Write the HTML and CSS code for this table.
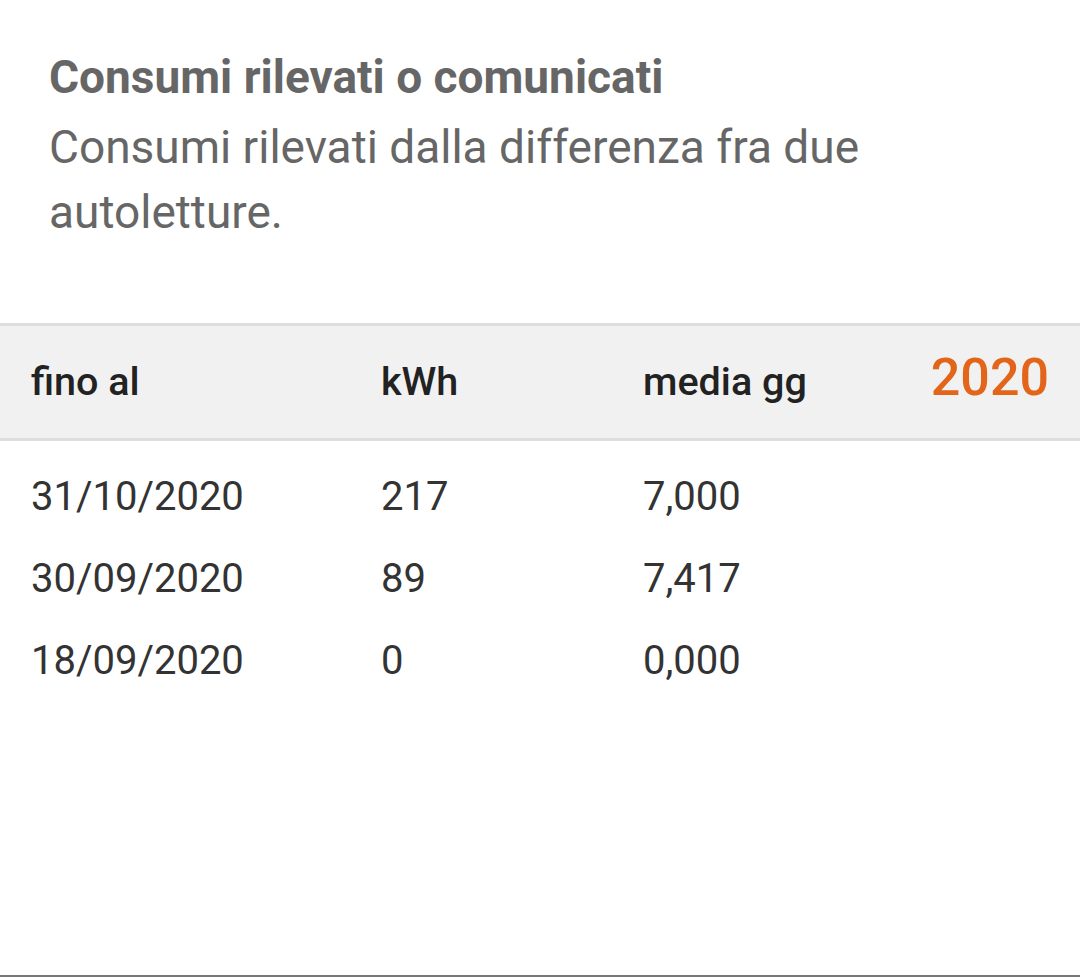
FILE: index.html
```html
<!DOCTYPE html>
<html lang="it">
<head>
<meta charset="utf-8">
<link rel="stylesheet" href="styles.css">
</head>
<body>
<div class="screen">
  <section class="intro">
    <h1 class="title">Consumi rilevati o comunicati</h1>
    <p class="desc">Consumi rilevati dalla differenza fra due autoletture.</p>
  </section>
  <div class="table">
    <div class="head">
      <span class="c1">fino al</span>
      <span class="c2">kWh</span>
      <span class="c3">media gg</span>
      <span class="year">2020</span>
    </div>
    <div class="rows">
      <div class="row"><span class="c1">31/10/2020</span><span class="c2">217</span><span class="c3">7,000</span></div>
      <div class="row"><span class="c1">30/09/2020</span><span class="c2">89</span><span class="c3">7,417</span></div>
      <div class="row"><span class="c1">18/09/2020</span><span class="c2">0</span><span class="c3">0,000</span></div>
    </div>
  </div>
</div>
</body>
</html>
```
FILE: styles.css
```css
html, body {
  margin: 0;
  padding: 0;
  background: #ffffff;
}
.screen {
  height: 977px;
  box-sizing: border-box;
  border-bottom: 2px solid #777777;
  font-family: Roboto, "Noto Sans", sans-serif;
  display: flex;
  flex-direction: column;
}
.intro {
  padding: 49px 180px 0 49px;
}
.title {
  margin: 0;
  font-size: 46px;
  font-weight: 700;
  color: #666666;
  line-height: 56px;
}
.desc {
  margin: 10px 0 0;
  font-size: 46px;
  font-weight: 400;
  color: #666666;
  line-height: 65px;
}
.table {
  margin-top: 78px;
}
.head {
  display: flex;
  align-items: center;
  height: 112px;
  background: #f1f1f1;
  border-top: 3px solid #dddddd;
  border-bottom: 3px solid #dddddd;
  padding-left: 31px;
  padding-right: 31px;
  font-size: 39.5px;
  line-height: 46px;
  font-weight: 500;
  color: #222222;
}
.c1 { width: 350px; }
.c2 { width: 262px; }
.c3 { width: 280px; }
.year {
  margin-left: auto;
  margin-bottom: 9px;
  font-size: 52px;
  line-height: 60px;
  font-weight: 500;
  color: #e2651a;
}
.rows {
  padding-top: 15px;
}
.row {
  display: flex;
  align-items: center;
  height: 82px;
  padding-left: 31px;
  font-size: 40px;
  line-height: 46px;
  color: #333333;
}
```
